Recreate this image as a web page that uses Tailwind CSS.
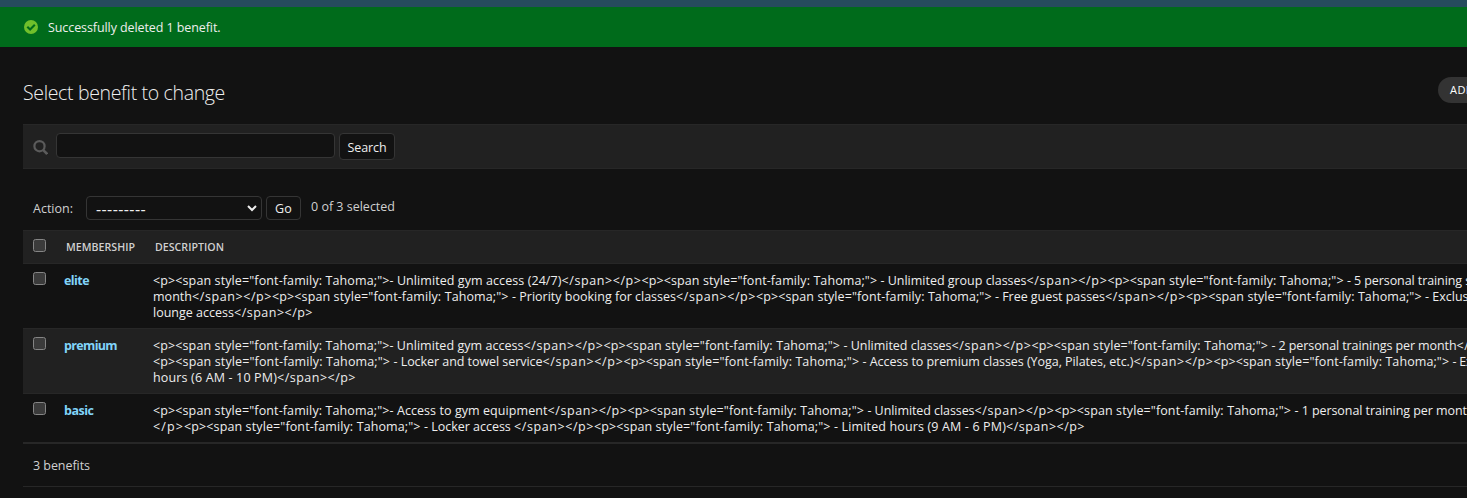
<!DOCTYPE html>
<html lang="en">
<head>
<meta charset="utf-8">
<title>Select benefit to change</title>
<script src="https://cdn.jsdelivr.net/npm/@tailwindcss/browser@4"></script>
</head>
<body class="h-[498px] overflow-hidden bg-[#121212] font-['Open_Sans','Noto_Sans',sans-serif] text-[12.5px] leading-4 text-[#d0d0d0]">
<header class="h-[7px] bg-[#264b5d]"></header>
<div class="flex h-10 items-center bg-[#006b1b] pl-6 text-[#eeeeee]">
  <svg class="mr-[10px] size-[14px]" viewBox="0 0 14 14"><circle cx="7" cy="7" r="7" fill="#70bf2b"/><path d="M3.3 6.8 6.1 9.5 10.8 4.8" fill="none" stroke="#006b1b" stroke-width="2.1"/></svg>
  <span class="pt-px" data-w="172.5">Successfully deleted 1 benefit.</span>
</div>
<main class="w-full overflow-hidden pl-[23px]">
  <div class="flex h-[77px] pt-[30px]">
    <h1 class="h-[30px] w-[1415px] shrink-0 pt-px text-[19.5px] leading-[30px] font-light text-[#eeeeee]"><span data-w="202">Select benefit to change</span></h1>
    <a class="flex h-[26px] w-[100px] shrink-0 items-center rounded-full bg-[#333333] pl-3 text-[11px] font-medium whitespace-nowrap text-white"><span data-w="73">ADD BENEFIT</span></a>
  </div>
  <form class="flex h-[45px] items-start border-y border-[#272727] bg-[#212121] pt-2 pl-[10px]">
    <svg class="mt-[7px] mr-[8px] h-[15px] w-[15px]" viewBox="0 0 15 15" fill="none" stroke="#5b5b5b" stroke-width="2.2"><circle cx="6.5" cy="6.2" r="5.1"/><path d="m10 9.8 4.2 4.2" stroke-width="2.6"/></svg>
    <div class="h-[25px] w-[279px] rounded border border-[#353535] bg-[#121212]"></div>
    <div class="ml-1 flex h-[27px] w-14 items-center justify-center rounded border border-[#353535] bg-[#121212] pt-[2px] text-[#eeeeee]"><span data-w="39">Search</span></div>
  </form>
  <div class="flex h-[61px] items-start pt-[27px] pl-[10px]">
    <span class="mt-[5px] w-[53px]"><span data-w="40">Action:</span></span>
    <div class="flex h-6 w-44 items-center justify-between rounded border border-[#353535] bg-[#121212] pr-1 pl-[9px] text-[#eeeeee]"><span class="pt-px text-[16px] leading-4" data-w="50">---------</span><svg class="size-[10px]" viewBox="0 0 10 10"><path d="m1 3 4 4 4-4" fill="none" stroke="#eeeeee" stroke-width="2"/></svg></div>
    <div class="ml-1 flex h-6 w-[35px] items-center justify-center rounded border border-[#353535] bg-[#121212] pt-px text-[#eeeeee]"><span data-w="17">Go</span></div>
    <span class="mt-[3px] ml-[10px]"><span data-w="84">0 of 3 selected</span></span>
  </div>
  <div class="flex h-[34px] border-y border-[#272727] bg-[#212121] pt-2 pl-[10px] text-[10.6px] font-semibold">
    <i class="mr-5 size-[13px] rounded-[2.5px] border border-[#858585] bg-[#3b3b3b]"></i>
    <span class="w-[89px]"><span data-w="69">MEMBERSHIP</span></span>
    <span data-w="69">DESCRIPTION</span>
  </div>
  <div id="rows"></div>
  <div class="flex h-11 items-center border-y border-[#272727] pt-px pl-[10px]"><span data-w="57">3 benefits</span></div>
</main>
<script>
const open = '<p><span style="font-family: Tahoma;">', close = '</span></p>';
// Each line is a run of [text, advance width] pairs.
const rows = [
  ['elite', 25, [
    [[open,236.5],['- Unlimited gym access (24/7)',172],[close,80],[open+' ',239],['- Unlimited group classes',146],[close,81],[open+' ',239.5],['- 5 personal training',115],[' sessions per',75]],
    [['month',39],[close,80],[open+' ',240],['- Priority booking for classes',164],[close,80],[open+' ',239],['- Free guest passes',110],[close,81],[open+' ',239],['- Exclusive',60]],
    [['lounge access',81],[close,79]]]],
  ['premium', 53, [
    [[open,236.5],['- Unlimited gym access',134],[close,80],[open+' ',240],['- Unlimited classes',108],[close,80],[open+' ',240],['- 2 personal trainings per month',185],[close,80]],
    [[open+' ',240.5],['- Locker and towel service',149],[close,81],[open+' ',239],['- Access to premium classes (Yoga, Pilates, etc.)',271],[close,80],[open+' ',239],['- Extended',60]],
    [['hours (6 AM - 10 PM)',124],[close,79]]]],
  ['basic', 29.5, [
    [[open,236.5],['- Access to gym equipment',158],[close,80],[open+' ',240],['- Unlimited classes',107],[close,80],[open+' ',240],['- 1 personal training per month',180],['</span>',48]],
    [['</p>',31],[open+' ',240],['- Locker access ',90],[close,80],[open+' ',240],['- Limited hours (9 AM - 6 PM)',172],[close,79]]]],
];
const el = (tag, cls, text) => { const e = document.createElement(tag); e.className = cls; if (text) e.textContent = text; return e; };
rows.forEach(([name, w, lines], i) => {
  const row = el('div', (i % 2 ? 'bg-[#212121]' : '') + ' flex items-start border-b border-[#272727] pt-[9px] pb-[7px] pl-[10px]');
  row.append(el('i', '-mt-px mr-[18px] size-[13px] shrink-0 rounded-[2.5px] border border-[#858585] bg-[#3b3b3b]'));
  const link = el('a', 'w-[89px] shrink-0 font-bold text-[#81d4fa]'), label = el('span', '', name);
  label.dataset.w = w; link.append(label); row.append(link);
  const cell = el('div', 'shrink-0 text-[#eeeeee]');
  lines.forEach(parts => {
    const line = el('div', 'flex h-4 whitespace-pre');
    parts.forEach(([t, pw]) => { const s = el('span', '', t); s.dataset.w = pw; line.append(s); });
    cell.append(line);
  });
  row.append(cell);
  document.getElementById('rows').append(row);
});
const labels = document.querySelectorAll('[data-w]');
labels.forEach(e => e.classList.add('inline-block', 'whitespace-pre', 'shrink-0'));
function fit() {
  labels.forEach(e => { e.style.letterSpacing = '0px'; e.style.width = 'max-content'; });
  const widths = [...labels].map(e => e.getBoundingClientRect().width);
  labels.forEach((e, i) => {
    const w = +e.dataset.w;
    e.style.letterSpacing = (w - widths[i]) / e.textContent.length + 'px';
    e.style.width = w + 'px';
  });
}
fit();
addEventListener('load', () => { fit(); requestAnimationFrame(fit); setTimeout(fit, 100); });
document.fonts.ready.then(fit);
new ResizeObserver(fit).observe(document.querySelector('main'));
</script>
</body>
</html>
